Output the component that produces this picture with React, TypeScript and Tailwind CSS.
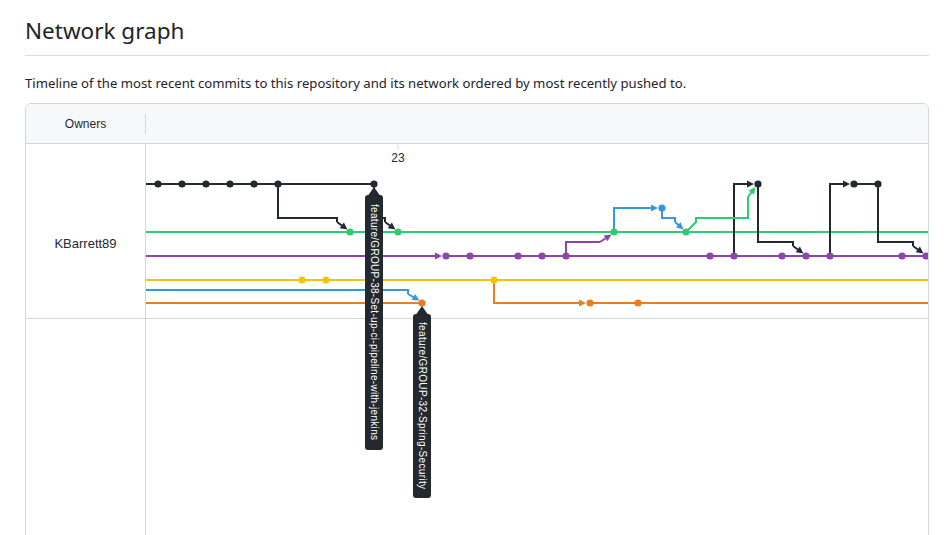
import React from 'react';

const C = {
  black: '#24292f',
  green: '#2ecc71',
  purple: '#8e44ad',
  yellow: '#f1c40f',
  blue: '#3498db',
  orange: '#e67e22',
};

// arrow from (x1,y1) to tip (x2,y2): shaft + head
function Arrow({ x1, y1, x2, y2, color }: { x1: number; y1: number; x2: number; y2: number; color: string }) {
  const a = Math.atan2(y2 - y1, x2 - x1);
  const L = 7;
  const W = 3.5;
  const cos = Math.cos(a);
  const sin = Math.sin(a);
  const bx = x2 - L * cos;
  const by = y2 - L * sin;
  const pts = `${x2},${y2} ${bx - W * sin},${by + W * cos} ${bx + W * sin},${by - W * cos}`;
  return (
    <g>
      <line x1={x1} y1={y1} x2={bx + cos} y2={by + sin} stroke={color} strokeWidth={2} />
      <polygon points={pts} fill={color} />
    </g>
  );
}

function Dots({ xs, y, color }: { xs: number[]; y: number; color: string }) {
  return (
    <g>
      {xs.map((x) => (
        <circle key={x} cx={x} cy={y} r={3.6} fill={color} />
      ))}
    </g>
  );
}

function Label({ x, y, bottom, text, textStart, textLen }: { x: number; y: number; bottom: number; text: string; textStart: number; textLen: number }) {
  return (
    <g>
      <polygon points={`${x},${y + 3} ${x - 7},${y + 13} ${x + 7},${y + 13}`} fill={C.black} />
      <rect x={x - 9} y={y + 11} width={18} height={bottom - y - 11} rx={3} fill={C.black} />
      <text
        transform={`translate(${x} ${textStart}) rotate(90)`}
        dominantBaseline="central"
        fill="#fff"
        fontSize={10}
        fontFamily="'Liberation Sans', Arial, sans-serif"
        textLength={textLen}
        lengthAdjust="spacing"
      >
        {text}
      </text>
    </g>
  );
}

function Graph() {
  const line = { fill: 'none', strokeWidth: 2 } as const;
  return (
    <svg className="absolute left-0 top-0" width={782} height={400}>
      <g transform="translate(-146 -144)">
        {/* date tick */}
        <line x1={398} y1={144} x2={398} y2={150} stroke="#d0d7de" strokeWidth={1} />
        <text x={398} y={162} textAnchor="middle" fontSize={12} fill="#24292f" fontFamily="'Liberation Sans', Arial, sans-serif">
          23
        </text>

        {/* base rows */}
        <path d="M145 232 H928" stroke={C.green} {...line} />
        <path d="M145 256 H436" stroke={C.purple} {...line} />
        <path d="M446 256 H928" stroke={C.purple} {...line} />
        <path d="M145 280 H928" stroke={C.yellow} {...line} />
        <path d="M145 303 H422" stroke={C.orange} {...line} />
        <path d="M590 303 H928" stroke={C.orange} {...line} />
        <path d="M145 184 H374" stroke={C.black} {...line} />
        <path d="M854 184 H878" stroke={C.black} {...line} />

        {/* black branches */}
        <path d="M278 184 V218 H337 V222" stroke={C.black} {...line} />
        <Arrow x1={337} y1={222} x2={347.5} y2={229.5} color={C.black} />
        <path d="M374 184 V218 H385 V222" stroke={C.black} {...line} />
        <Arrow x1={385} y1={222} x2={395.5} y2={229.5} color={C.black} />
        <path d="M734 256 V184 H746" stroke={C.black} {...line} />
        <Arrow x1={746} y1={184} x2={754} y2={184} color={C.black} />
        <path d="M758 184 V242 H793 V246" stroke={C.black} {...line} />
        <Arrow x1={793} y1={246} x2={803.5} y2={253.5} color={C.black} />
        <path d="M830 256 V184 H842" stroke={C.black} {...line} />
        <Arrow x1={842} y1={184} x2={850} y2={184} color={C.black} />
        <path d="M878 184 V242 H913 V246" stroke={C.black} {...line} />
        <Arrow x1={913} y1={246} x2={923.5} y2={253.5} color={C.black} />

        {/* purple */}
        <Arrow x1={434} y1={256} x2={442} y2={256} color={C.purple} />
        <path d="M566 256 V242 H600" stroke={C.purple} {...line} />
        <Arrow x1={600} y1={242} x2={611.5} y2={234.5} color={C.purple} />

        {/* green */}
        <path d="M686 232 L696 222 V218 H748 V197" stroke={C.green} {...line} />
        <Arrow x1={748} y1={197} x2={755.5} y2={187} color={C.green} />

        {/* blue */}
        <path d="M145 290 H408 V294" stroke={C.blue} {...line} />
        <Arrow x1={408} y1={294} x2={419.5} y2={300.5} color={C.blue} />
        <path d="M614 232 V208 H650" stroke={C.blue} {...line} />
        <Arrow x1={650} y1={208} x2={658} y2={208} color={C.blue} />
        <path d="M662 208 V218 H675 V222" stroke={C.blue} {...line} />
        <Arrow x1={675} y1={222} x2={683.5} y2={229.5} color={C.blue} />

        {/* yellow -> orange */}
        <path d="M494 280 V303 H580" stroke={C.orange} {...line} />
        <Arrow x1={578} y1={303} x2={586} y2={303} color={C.orange} />

        {/* commits */}
        <Dots xs={[158, 182, 206, 230, 254, 278, 374, 758, 854, 878]} y={184} color={C.black} />
        <Dots xs={[662]} y={208} color={C.blue} />
        <Dots xs={[350, 398, 614, 686]} y={232} color={C.green} />
        <Dots xs={[446, 470, 518, 542, 566, 710, 734, 782, 806, 830, 902, 926]} y={256} color={C.purple} />
        <Dots xs={[302, 326, 494]} y={280} color={C.yellow} />
        <Dots xs={[422, 590, 638]} y={303} color={C.orange} />

        {/* branch labels */}
        <Label x={374} y={184} bottom={450} text="feature/GROUP-38-Set-up-ci-pipeline-with-jenkins" textStart={204} textLen={236} />
        <Label x={422} y={303} bottom={498} text="feature/GROUP-32-Spring-Security" textStart={322} textLen={167} />
      </g>
    </svg>
  );
}

export default function App() {
  return (
    <div className="min-h-screen bg-white pl-[25px] pr-[16px] font-['Noto_Sans',sans-serif] text-[#1f2328]">
      <h2 className="border-b border-[#d8dee4] pt-[16px] pb-[9px] text-[22.5px] font-normal leading-[30px]">Network graph</h2>
      <p className="mt-[17px] mb-[10px] text-[13.15px] leading-[20px]">
        Timeline of the most recent commits to this repository and its network ordered by most recently pushed to.
      </p>

      <div className="overflow-hidden rounded-md border border-[#d0d7de] font-['Liberation_Sans',Arial,sans-serif]">
        {/* Header */}
        <div className="flex h-[40px] items-center border-b border-[#d0d7de] bg-[#f6f8fa]">
          <div className="w-[119px] text-center text-[12px] text-[#24292f]">Owners</div>
          <div className="h-[20px] w-px bg-[#d0d7de]" />
        </div>

        {/* Body */}
        <div className="flex">
          <div className="w-[120px] shrink-0 border-r border-[#d0d7de]">
            <div className="h-[175px] border-b border-[#d0d7de] pt-[90px] text-center text-[13px] leading-[20px] text-[#24292f]">
              KBarrett89
            </div>
            <div className="h-[260px]" />
          </div>
          <div className="relative flex-1 overflow-hidden">
            <div className="h-[175px] border-b border-[#d0d7de]" />
            <div className="h-[260px]" />
            <Graph />
          </div>
        </div>
      </div>
    </div>
  );
}
